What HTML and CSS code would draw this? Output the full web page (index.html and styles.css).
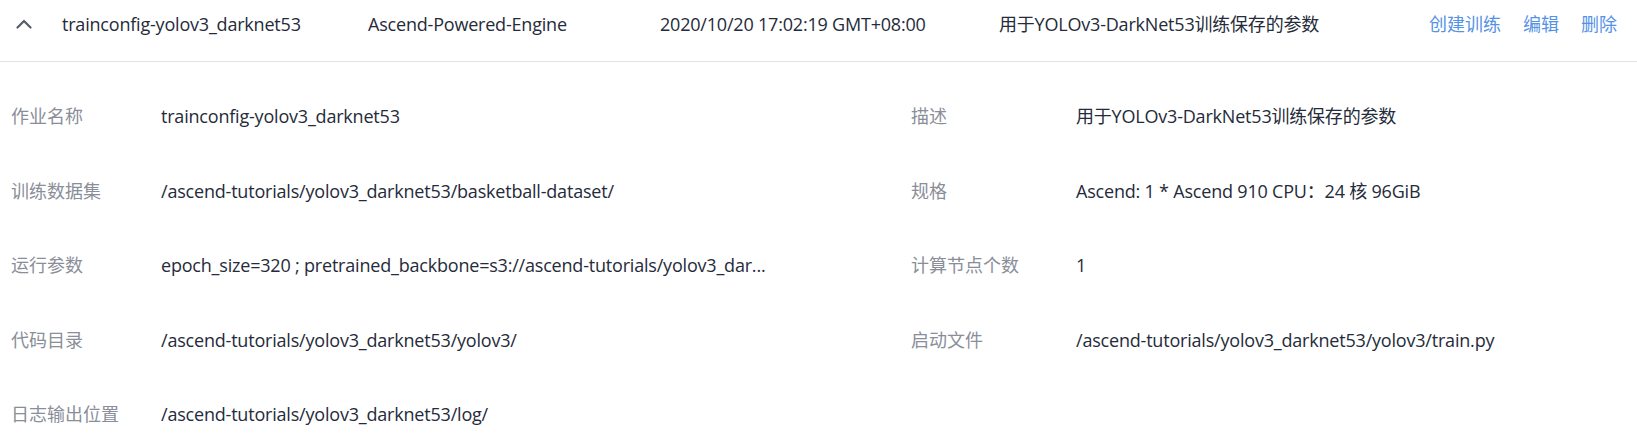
FILE: index.html
```html
<!DOCTYPE html>
<html lang="zh-CN">
<head>
<meta charset="utf-8">
<title>训练作业参数</title>
<link rel="stylesheet" href="styles.css">
</head>
<body>
<div class="item">
  <div class="item-head">
    <div class="cell cell-toggle">
      <svg class="chevron" width="16" height="10" viewBox="0 0 16 10"><polyline points="1.5,8.5 8,2 14.5,8.5" fill="none" stroke="#575d6c" stroke-width="2.2" stroke-linecap="round" stroke-linejoin="round"/></svg>
    </div>
    <div class="cell cell-name">trainconfig-yolov3_darknet53</div>
    <div class="cell cell-engine">Ascend-Powered-Engine</div>
    <div class="cell cell-date">2020/10/20 17:02:19 GMT+08:00</div>
    <div class="cell cell-desc">用于YOLOv3-DarkNet53训练保存的参数</div>
    <div class="cell cell-actions">
      <a class="action">创建训练</a>
      <a class="action">编辑</a>
      <a class="action">删除</a>
    </div>
  </div>
  <div class="item-body">
    <div class="field">
      <span class="label">作业名称</span>
      <span class="value">trainconfig-yolov3_darknet53</span>
    </div>
    <div class="field field-right">
      <span class="label">描述</span>
      <span class="value">用于YOLOv3-DarkNet53训练保存的参数</span>
    </div>
    <div class="field">
      <span class="label">训练数据集</span>
      <span class="value">/ascend-tutorials/yolov3_darknet53/basketball-dataset/</span>
    </div>
    <div class="field field-right">
      <span class="label">规格</span>
      <span class="value">Ascend: 1 * Ascend 910 CPU：24 核 96GiB</span>
    </div>
    <div class="field">
      <span class="label">运行参数</span>
      <span class="value">epoch_size=320 ; pretrained_backbone=s3://ascend-tutorials/yolov3_dar...</span>
    </div>
    <div class="field field-right">
      <span class="label">计算节点个数</span>
      <span class="value">1</span>
    </div>
    <div class="field">
      <span class="label">代码目录</span>
      <span class="value">/ascend-tutorials/yolov3_darknet53/yolov3/</span>
    </div>
    <div class="field field-right">
      <span class="label">启动文件</span>
      <span class="value">/ascend-tutorials/yolov3_darknet53/yolov3/train.py</span>
    </div>
    <div class="field">
      <span class="label">日志输出位置</span>
      <span class="value">/ascend-tutorials/yolov3_darknet53/log/</span>
    </div>
  </div>
</div>
</body>
</html>
```
FILE: styles.css
```css
html, body {
  margin: 0;
  padding: 0;
  background: #ffffff;
}

body {
  font-family: "Open Sans", "Noto Sans CJK SC", sans-serif;
  font-size: 18px;
  line-height: 26px;
  color: #252b3a;
}

.item-head {
  display: flex;
  align-items: center;
  padding: 11px 20px 24px 0;
  border-bottom: 1px solid #e3e3e3;
  white-space: nowrap;
}

.cell-toggle {
  width: 62px;
  flex: none;
  display: flex;
  align-items: center;
  padding-left: 16px;
  box-sizing: border-box;
}

.chevron {
  display: block;
}

.cell-name,
.cell-engine,
.cell-date,
.cell-desc,
.value {
  letter-spacing: -0.2px;
}

.cell-name {
  width: 306px;
  flex: none;
}

.cell-engine {
  width: 292px;
  flex: none;
}

.cell-date {
  width: 339px;
  flex: none;
}

.cell-desc {
  flex: 1;
}

.cell-actions {
  display: flex;
  gap: 22px;
}

.action {
  color: #5592e6;
  cursor: pointer;
}

.item-body {
  display: grid;
  grid-template-columns: 900px 1fr;
  row-gap: 48.6px;
  padding: 41px 0 17px 11px;
}

.field {
  display: flex;
  white-space: nowrap;
}

.label {
  width: 150px;
  flex: none;
  color: #8a8e99;
}

.field-right .label {
  width: 165px;
}

.value {
  color: #252b3a;
}
```
